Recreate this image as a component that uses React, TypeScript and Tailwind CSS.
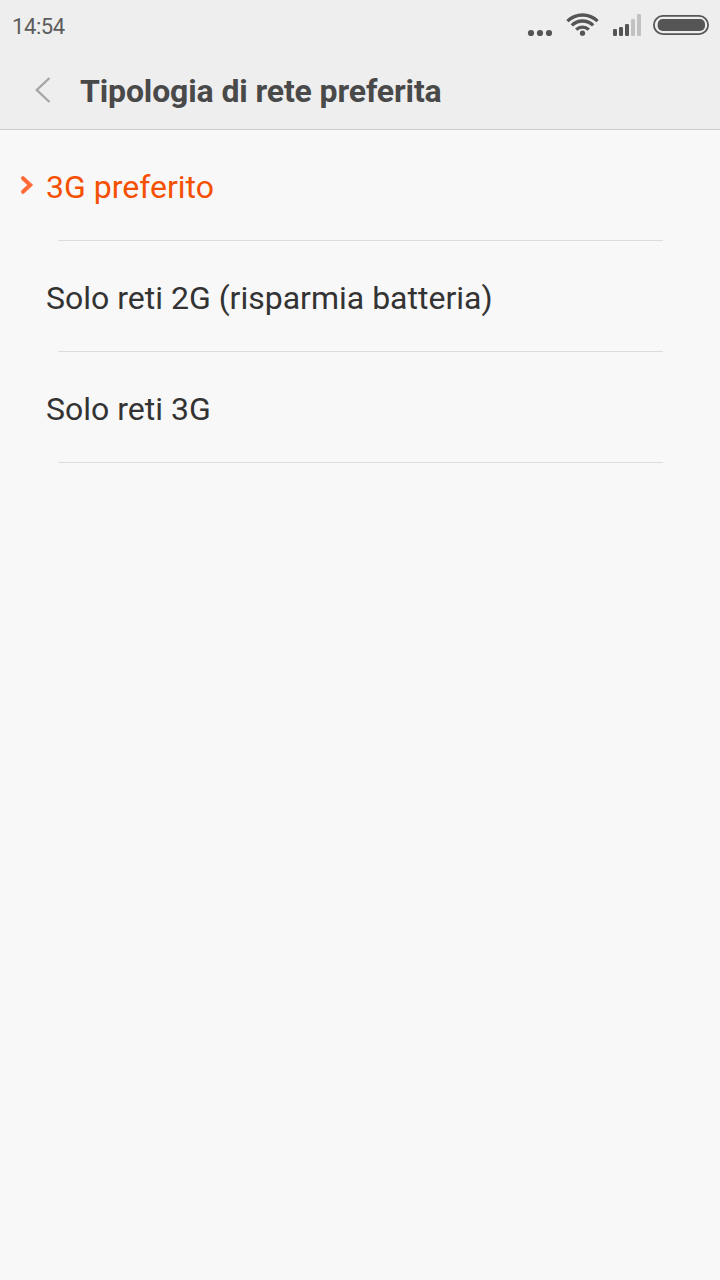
import React from 'react';

interface NetworkOption {
  id: string;
  label: string;
}

interface OptionRowProps {
  option: NetworkOption;
  selected: boolean;
  onSelect: (id: string) => void;
}

const OPTIONS: NetworkOption[] = [
  { id: '3g-preferred', label: '3G preferito' },
  { id: '2g-only', label: 'Solo reti 2G (risparmia batteria)' },
  { id: '3g-only', label: 'Solo reti 3G' },
];

const StatusIcons: React.FC = () => (
  <div className="flex h-[50px] items-start">
    <svg className="mr-3 h-[50px] w-[26px]" viewBox="527 0 26 50" fill="#555555">
      <circle cx="531" cy="33" r="3.1" />
      <circle cx="540" cy="33" r="3.1" />
      <circle cx="549" cy="33" r="3.1" />
    </svg>

    {/* Wi-Fi */}
    <svg className="mr-3 h-[50px] w-[36px]" viewBox="565 0 36 50" fill="none" stroke="#555555" strokeWidth="3.3">
      <path d="M567.4 21.2 A21.5 21.5 0 0 1 597.6 21.2" />
      <path d="M571.8 25.4 A15.2 15.2 0 0 1 593.2 25.4" />
      <path d="M576.2 29.6 A9 9 0 0 1 588.8 29.6" />
      <circle cx="582.5" cy="33.2" r="2.6" fill="#555555" stroke="none" />
    </svg>

    {/* Signal strength */}
    <svg className="mr-3 h-[50px] w-[28px]" viewBox="613 0 28 50" fill="#555555">
      <rect x="613" y="29" width="4" height="7" rx="1.3" />
      <rect x="619" y="27" width="4" height="9" rx="1.3" />
      <rect x="625" y="24" width="4" height="12" rx="1.3" />
      <rect x="631" y="19" width="4" height="17" rx="1.3" fill="#c2c2c2" />
      <rect x="637" y="14" width="4" height="22" rx="1.3" fill="#c2c2c2" />
    </svg>

    <svg className="h-[50px] w-[56px]" viewBox="653 0 56 50">
      <rect x="653.9" y="15.9" width="54.2" height="18.2" rx="9.1" fill="none" stroke="#555555" strokeWidth="1.8" />
      <rect x="657.7" y="19" width="47.3" height="12" rx="5" fill="#555555" />
    </svg>
  </div>
);

const OptionRow: React.FC<OptionRowProps> = ({ option, selected, onSelect }) => (
  <li>
    <button
      onClick={() => onSelect(option.id)}
      className={`flex h-[110px] w-full items-center pl-5 text-left text-[32px] ${
        selected ? 'text-[#f55000]' : 'text-[#333333]'
      }`}
    >
      <span className="flex w-[26px] shrink-0">
        {selected && (
          <svg className="h-5 w-[14px]" viewBox="0 0 14 20" fill="none" stroke="#ff6c37" strokeWidth="4">
            <path d="M3 3.2 L10.2 10 L3 16.8" strokeLinecap="round" />
          </svg>
        )}
      </span>
      <span className="pt-1 leading-9">{option.label}</span>
    </button>
    <div className="mr-[57px] ml-[58px] h-px bg-[#dcdcdc]" />
  </li>
);

export default function App() {
  const [selectedId, setSelectedId] = React.useState('3g-preferred');

  return (
    <div className="h-[1280px] w-[720px] overflow-hidden bg-[#f8f8f8] font-['Roboto',sans-serif]">
      <header className="h-[130px] border-b border-[#cccccc] bg-[#eeeeee]">
        <div className="flex h-[50px] items-center justify-between pr-[11px] pl-3">
          <span className="pt-[3px] text-[22px] leading-7 tracking-[-0.4px] text-[#5c5c5c]">14:54</span>
          <StatusIcons />
        </div>
        <div className="flex h-[79px] items-center pl-[34px]">
          <button aria-label="Indietro" className="mr-[28px]">
            <svg className="h-[28px] w-[18px]" viewBox="0 0 18 28" fill="none" stroke="#a6a6a6" strokeWidth="2.4">
              <path d="M15.5 2 L2.8 14 L15.5 26" />
            </svg>
          </button>
          <h1 className="pt-0.5 text-[32px] leading-9 font-bold tracking-[-0.13px] text-[#494949]">
            Tipologia di rete preferita
          </h1>
        </div>
      </header>

      <ul>
        {OPTIONS.map((option) => (
          <OptionRow
            key={option.id}
            option={option}
            selected={option.id === selectedId}
            onSelect={setSelectedId}
          />
        ))}
      </ul>
    </div>
  );
}
